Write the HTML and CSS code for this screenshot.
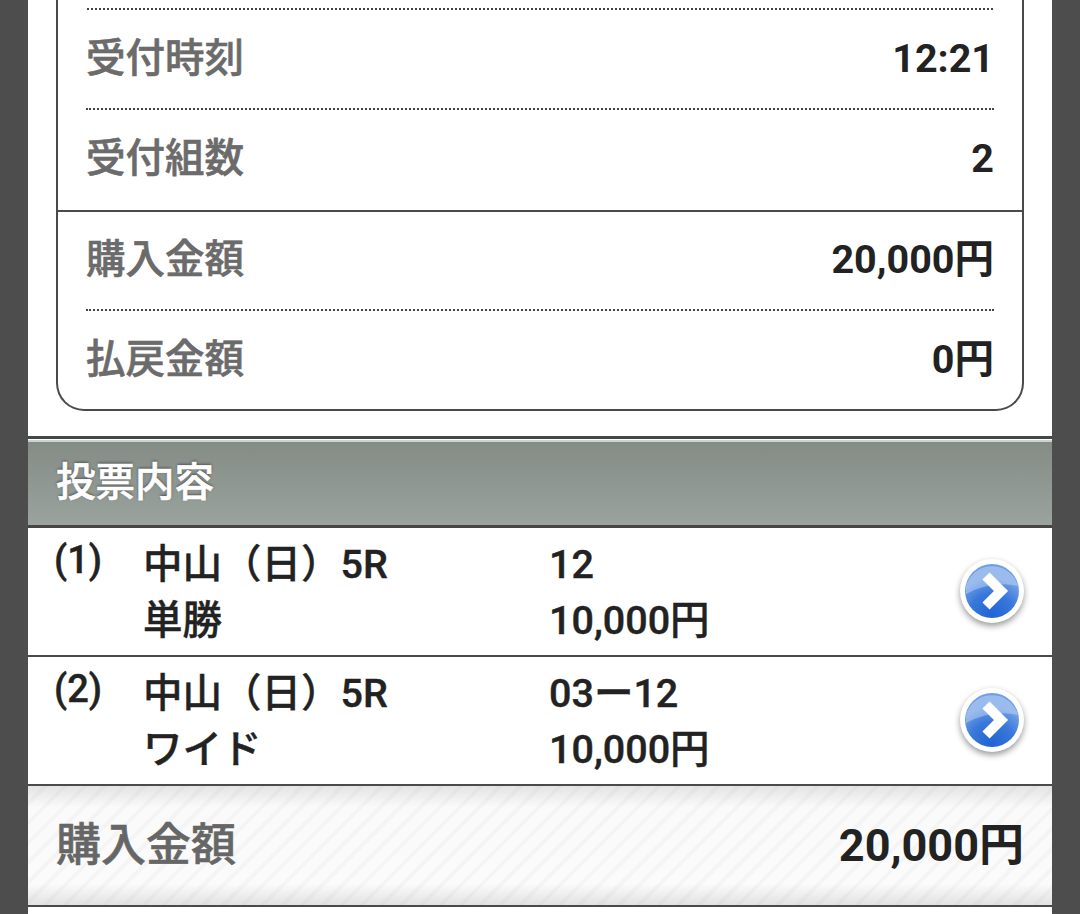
FILE: index.html
```html
<!DOCTYPE html>
<html lang="ja">

<head>
  <meta charset="utf-8">
  <meta name="viewport" content="width=device-width, initial-scale=1.0">
  <link rel="stylesheet" href="styles.css">
</head>

<body>
  <div class="page">
    <!-- Summary box -->
    <div class="summary-wrap">
      <div class="summary">
        <div class="summary-row first">
          <span class="label">受付時刻</span>
          <span class="value">12:21</span>
        </div>
        <div class="summary-row second">
          <span class="label">受付組数</span>
          <span class="value">2</span>
        </div>
        <div class="summary-row third">
          <span class="label">購入金額</span>
          <span class="value">20,000円</span>
        </div>
        <div class="summary-row">
          <span class="label">払戻金額</span>
          <span class="value">0円</span>
        </div>
      </div>
    </div>

    <!-- Vote list -->
    <h2 class="section-head">投票内容</h2>

    <div class="vote-row">
      <div class="vote-no">(1)</div>
      <div class="vote-race">中山（日）5R<br>単勝</div>
      <div class="vote-bet">12<br>10,000円</div>
      <svg class="go-icon" viewBox="0 0 72 72" width="72" height="72">
        <defs>
          <radialGradient id="blue1" cx="50%" cy="95%" r="70%">
            <stop offset="0" stop-color="#1f63d6"/>
            <stop offset="0.6" stop-color="#3a78da"/>
            <stop offset="1" stop-color="#6f9fe6"/>
          </radialGradient>
        </defs>
        <circle cx="36" cy="35" r="32" fill="#fff"/>
        <circle cx="36" cy="35" r="27" fill="url(#blue1)"/>
        <path d="M10 30 A27 27 0 0 1 62 30 Q36 24 10 38 Z" fill="#fff" opacity="0.3"/>
        <path d="M30 20 L45 35 L30 50" fill="none" stroke="#fff" stroke-width="10"/>
      </svg>
    </div>

    <div class="vote-row">
      <div class="vote-no">(2)</div>
      <div class="vote-race">中山（日）5R<br>ワイド</div>
      <div class="vote-bet">03ー12<br>10,000円</div>
      <svg class="go-icon" viewBox="0 0 72 72" width="72" height="72">
        <circle cx="36" cy="35" r="32" fill="#fff"/>
        <circle cx="36" cy="35" r="27" fill="url(#blue1)"/>
        <path d="M10 30 A27 27 0 0 1 62 30 Q36 24 10 38 Z" fill="#fff" opacity="0.3"/>
        <path d="M30 20 L45 35 L30 50" fill="none" stroke="#fff" stroke-width="10"/>
      </svg>
    </div>

    <!-- Total -->
    <div class="total">
      <span class="total-label">購入金額</span>
      <span class="total-value">20,000円</span>
    </div>
  </div>
</body>
</html>
```

FILE: styles.css
```css
html, body {
  margin: 0;
  height: 914px;
  overflow: hidden;
  background-color: #4d4d4d;
  font-family: Roboto, "Noto Sans CJK JP", sans-serif;
  color: #222;
}

.page {
  width: 1024px;
  height: 914px;
  margin: 0 auto;
  background-color: #fff;
  overflow: hidden;
}

.summary-wrap {
  padding: 0 28px 25px 28px;
}

.summary {
  border: 2px solid #4a4a4a;
  border-top: none;
  border-radius: 0 0 28px 28px;
  padding: 0 28px 0 28px;
  height: 411px;
  box-sizing: border-box;
}

.summary-row {
  display: flex;
  justify-content: space-between;
  align-items: center;
  height: 100px;
  font-size: 39.5px;
  line-height: 1;
  box-sizing: border-box;
  padding-bottom: 2px;
}

/* row sizes are not quite even in the original */
.summary-row.first {
  height: 110px;
  padding-top: 9px;
  padding-bottom: 0;
  border-top: 0;
  border-bottom: 2px dotted #444;
  background-image: radial-gradient(circle, #444 1px, transparent 1.2px);
  background-size: 4px 2px;
  background-repeat: repeat-x;
  background-position: 0 8px;
}

.summary-row.second {
  height: 100px;
}

.summary-row.third {
  position: relative;
  height: 101px;
  padding-bottom: 0;
  border-bottom: 2px dotted #444;
}

.summary-row.third::before {
  content: "";
  position: absolute;
  left: -28px;
  right: -28px;
  top: 0;
  border-top: 2px solid #4a4a4a;
}

.label {
  color: #6b6b6b;
  font-weight: 500;
  -webkit-text-stroke: 0.6px #6b6b6b;
}

.value {
  font-weight: 700;
}

.section-head {
  margin: 0;
  height: 92px;
  box-sizing: border-box;
  border-top: 3px solid #464646;
  border-bottom: 3px solid #464646;
  box-shadow: inset 0 1px 0 #fff, inset 0 3px 0 #c9d6cf;
  background: linear-gradient(#848b85, #9ba39e);
  color: #fff;
  font-size: 39.5px;
  font-weight: 500;
  -webkit-text-stroke: 0.6px #fff;
  line-height: 88px;
  padding-left: 28px;
  text-shadow: 0 -1px 3px #444;
}

.vote-row {
  position: relative;
  display: flex;
  height: 129px;
  box-sizing: border-box;
  border-bottom: 2px solid #4a4a4a;
  font-size: 39.5px;
  font-weight: 500;
  -webkit-text-stroke: 0.4px #222;
  line-height: 56px;
  padding-top: 9px;
}

.vote-no {
  width: 89px;
  padding-left: 26px;
  flex: none;
  font-size: 38px;
  line-height: 46px;
}

.vote-race {
  width: 406px;
  flex: none;
}

.go-icon {
  position: absolute;
  right: 24px;
  top: 28px;
  filter: drop-shadow(0 3px 3px rgba(0, 0, 0, 0.4));
}

.total {
  display: flex;
  justify-content: space-between;
  align-items: center;
  height: 121px;
  box-sizing: border-box;
  border-bottom: 2px solid #4a4a4a;
  padding: 0 28px 1px 28px;
  line-height: 1;
  background:
    repeating-linear-gradient(-45deg, transparent 0 10px, rgba(0, 0, 0, 0.025) 10px 14px),
    linear-gradient(#e4e4e4, #fafafa 18%, #fbfbfb 82%, #e2e2e2);
}

.total-label {
  color: #666;
  font-size: 45px;
  font-weight: 500;
  -webkit-text-stroke: 0.6px #666;
}

.total-value {
  font-size: 45px;
  font-weight: 700;
}
```
